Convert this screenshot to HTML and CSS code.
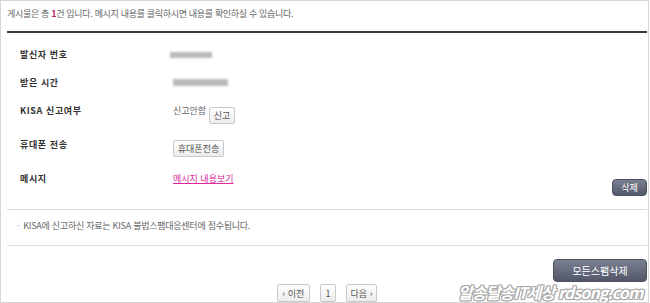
FILE: index.html
```html
<!DOCTYPE html>
<html lang="ko">
<head>
<meta charset="utf-8">
<link rel="stylesheet" href="styles.css">
</head>
<body>
<div class="frame">
  <p class="summary">게시물은 총 <b class="count">1</b>건 입니다. 메시지 내용를 클릭하시면 내용를 확인하실 수 있습니다.</p>
  <div class="rule-dark"></div>
  <div class="rows">
    <div class="row">
      <div class="label">발신자 번호</div>
      <div class="value"><span class="blur blur-a"></span></div>
    </div>
    <div class="row">
      <div class="label">받은 시간</div>
      <div class="value"><span class="blur blur-b"></span></div>
    </div>
    <div class="row row-tall">
      <div class="label">KISA 신고여부</div>
      <div class="value">신고안함 <button class="btn-light btn-report">신고</button></div>
    </div>
    <div class="row row-tall">
      <div class="label">휴대폰 전송</div>
      <div class="value"><button class="btn-light btn-phone">휴대폰전송</button></div>
    </div>
    <div class="row row-msg">
      <div class="label">메시지</div>
      <div class="value"><a class="msg-link" href="#">메시지 내용보기</a></div>
      <button class="btn-dark btn-del">삭제</button>
    </div>
  </div>
  <div class="rule"></div>
  <p class="note"><span class="dot">·</span>KISA에 신고하신 자료는 KISA 불법스팸대응센터에 접수됩니다.</p>
  <div class="rule"></div>
  <div class="actions">
    <button class="btn-dark btn-all">모든스팸삭제</button>
  </div>
  <div class="pager">
    <button class="btn-light pg pg-prev">‹ 이전</button>
    <button class="btn-light pg pg-num">1</button>
    <button class="btn-light pg pg-next">다음 ›</button>
  </div>
  <div class="watermark">알송달송IT세상 rdsong.com</div>
</div>
</body>
</html>
```
FILE: styles.css
```css
* { box-sizing: border-box; }
html, body { margin: 0; padding: 0; background: #fff; overflow: hidden; }
body {
  font-family: "Noto Sans CJK KR", "Noto Sans", sans-serif;
  font-size: 9px;
  color: #666;
}
.frame {
  position: relative;
  width: 649px;
  height: 303px;
  border: 1px solid #d6d6d6;
  padding: 0 1px 0 6px;
  overflow: hidden;
}
.summary {
  margin: 0;
  padding-top: 7px;
  line-height: 12px;
  height: 19px;
  color: #666;
  letter-spacing: -0.32px;
}
.count { color: #b8206f; font-weight: bold; }
.rule-dark {
  margin-top: 11px;
  height: 2px;
  background: #3a3a3a;
}
.rows { padding-top: 16px; }
.row {
  display: flex;
  align-items: flex-start;
  height: 28px;
  padding-left: 13px;
  line-height: 12px;
}
.row-tall { height: 34px; }
.row-msg { height: 23px; }
.label {
  width: 153px;
  flex: none;
  color: #333;
  font-weight: bold;
  letter-spacing: 0.6px;
}
.value { display: flex; align-items: flex-start; color: #666; gap: 3px; }
.blur {
  display: block;
  height: 6px;
  background: #bbb;
  filter: blur(1px);
  margin-top: 3px;
}
.blur-a { width: 42px; margin-left: -3px; }
.blur-b { width: 55px; margin-top: 2px; height: 7px; }
.btn-light {
  font-family: inherit;
  font-size: 9px;
  color: #555;
  background: linear-gradient(#ffffff, #ececec);
  border: 1px solid #c9c9c9;
  border-radius: 2px;
  height: 17px;
  padding: 0 4px;
  line-height: 15px;
  margin: 0;
}
.btn-report { margin-top: 2px; width: 26px; padding: 0; }
.btn-phone { margin-top: 1px; width: 51px; padding: 0; }
.msg-link {
  color: #dd2a9c;
  text-decoration: underline;
}
.btn-dark {
  font-family: inherit;
  font-size: 9px;
  color: #fff;
  background: linear-gradient(#7a7f92, #525769);
  border: 1px solid #4a4e5e;
  border-radius: 4px;
  margin: 0;
  padding: 0;
}
.btn-del {
  margin-left: auto;
  align-self: flex-end;
  width: 35px;
  height: 17px;
}
.rule {
  height: 1px;
  background: #dcdcdc;
}
.rows + .rule { margin-top: 13px; }
.note {
  margin: 0;
  padding: 10px 0 0 10px;
  height: 35px;
  line-height: 12px;
  color: #666;
  letter-spacing: -0.25px;
}
.dot { color: #aaa; margin-right: 4px; }
.actions {
  display: flex;
  justify-content: flex-end;
  padding-top: 13px;
}
.btn-all {
  width: 94px;
  height: 23px;
  font-size: 10px;
}
.pager {
  display: flex;
  justify-content: center;
  gap: 10px;
  margin-top: 2px;
}
.pg { height: 18px; padding: 0; }
.pg-prev { width: 33px; }
.pg-num { width: 16px; }
.pg-next { width: 31px; }
.watermark {
  position: absolute;
  left: 457px;
  top: 279px;
  font-size: 16px;
  font-weight: bold;
  font-style: italic;
  letter-spacing: -0.9px;
  color: #fff;
  white-space: nowrap;
  text-shadow: -1px -1px 0 #a8a8a8, 1px -1px 0 #a8a8a8, -1px 1px 0 #a8a8a8, 1px 1px 0 #a8a8a8, 0 1px 0 #a8a8a8, 0 -1px 0 #a8a8a8, 1px 0 0 #a8a8a8, -1px 0 0 #a8a8a8;
}
```
